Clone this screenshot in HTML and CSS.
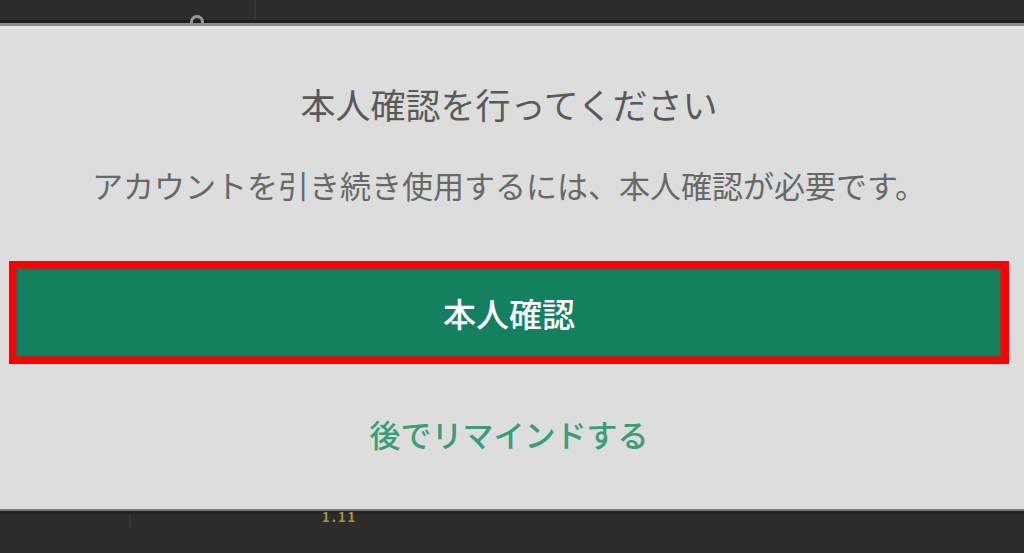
FILE: index.html
```html
<!DOCTYPE html>
<html lang="ja">

<head>
	<meta charset="UTF-8">
	<meta name="viewport" content="width=device-width, initial-scale=1.0">
	<title>本人確認</title>
	<link rel="stylesheet" href="styles.css">
</head>

<body>
	<div class="top-bar">
		<span class="top-knob"></span>
		<span class="top-divider"></span>
	</div>

	<div class="dialog">
		<h1 class="dialog-title">本人確認を行ってください</h1>
		<p class="dialog-text">アカウントを引き続き使用するには、本人確認が必要です。</p>
		<button class="verify-btn">本人確認</button>
		<a class="remind-link" href="#">後でリマインドする</a>
	</div>

	<div class="bottom-bar">
		<span class="bottom-divider"></span>
		<span class="bottom-label">1.11</span>
	</div>
</body>

</html>
```

FILE: styles.css
```css
body {
	margin: 0;
	height: 100vh;
	display: flex;
	flex-direction: column;
	background-color: #2c2c2c;
	font-family: 'Noto Sans CJK JP', 'Noto Sans', sans-serif;
	overflow: hidden;
}

.top-bar {
	height: 20px;
	border-bottom: 3px solid #1e1e1e;
	display: flex;
	align-items: flex-end;
	padding-left: 190px;
	gap: 50px;
}

.top-knob {
	width: 14px;
	height: 8px;
	border: 3px solid #9a9a9a;
	border-bottom: none;
	border-radius: 8px 8px 0 0;
	box-sizing: border-box;
	margin-bottom: -3px;
}

.top-divider {
	width: 2px;
	height: 20px;
	background-color: #353535;
}

.dialog {
	height: 488px;
	box-sizing: border-box;
	border-top: 3px solid #8c8c8c;
	border-bottom: 2px solid #7a7a7a;
	box-shadow: inset 0 3px #e8e8e8;
	background-color: #dddddd;
	display: flex;
	flex-direction: column;
	align-items: center;
	padding: 58px 15px 0 9px;
}

.dialog-title {
	margin: 0;
	font-size: 35px;
	line-height: 40px;
	font-weight: normal;
	color: #595959;
}

.dialog-text {
	margin: 43px 0 0 0;
	font-size: 31px;
	line-height: 36px;
	color: #686868;
}

.verify-btn {
	margin-top: 58px;
	width: 100%;
	height: 103px;
	border: 7px solid #ff0000;
	box-shadow: inset 0 0 0 2px #7d4432;
	background-color: #14805f;
	color: #ffffff;
	font-family: 'Noto Sans CJK JP', 'Noto Sans', sans-serif;
	font-size: 33px;
	font-weight: 500;
	cursor: pointer;
}

.remind-link {
	margin-top: 52px;
	font-size: 31px;
	line-height: 36px;
	font-weight: 500;
	color: #3c9c7a;
	text-decoration: none;
}

.bottom-bar {
	flex: 1;
	border-top: 3px solid #232323;
	display: flex;
	align-items: flex-start;
	padding-left: 129px;
}

.bottom-divider {
	width: 2px;
	height: 14px;
	background-color: #363636;
}

.bottom-label {
	margin-left: 191px;
	margin-top: -4px;
	font-size: 13px;
	line-height: 13px;
	font-weight: bold;
	letter-spacing: 2px;
	color: #a89a2a;
}
```
